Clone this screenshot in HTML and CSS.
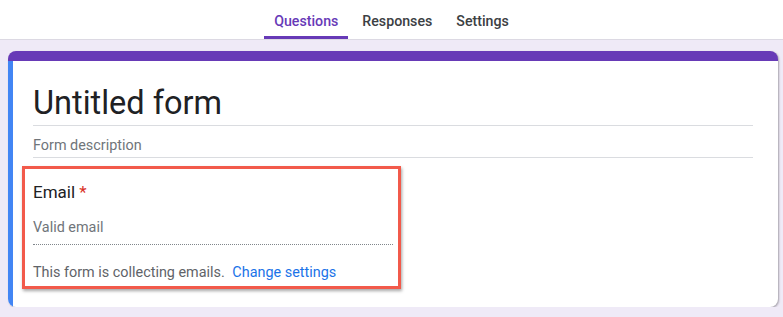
FILE: index.html
```html
<!DOCTYPE html>
<html lang="en">

<head>
    <meta charset="UTF-8">
    <meta name="viewport" content="width=device-width, initial-scale=1.0">
    <title>Untitled form</title>
    <link rel="stylesheet" href="styles.css">
</head>

<body>
    <div class="form-header">
        <ul class="tabs">
            <li class="tab active">Questions</li>
            <li class="tab">Responses</li>
            <li class="tab">Settings</li>
        </ul>
    </div>

    <div class="form-main">
        <div class="form-card">
            <div class="card-body">
                <div class="form-title">Untitled form</div>
                <div class="form-desc">Form description</div>

                <!--邮箱字段-->
                <div class="email-box">
                    <div class="email-label">Email <span class="required">*</span></div>
                    <div class="email-input">Valid email</div>
                    <div class="email-note">This form is collecting emails. <a href="#" class="change-link">Change settings</a></div>
                </div>
            </div>
        </div>
    </div>
</body>

</html>
```

FILE: styles.css
```css
* {
    padding: 0;
    margin: 0;
    list-style: none;
    text-decoration: none;
    box-sizing: border-box;
}

body {
    background: #efeaf7;
    font-family: Roboto, "Liberation Sans", sans-serif;
    color: #202124;
}

/*顶部标签栏*/
.form-header {
    background: #fff;
    height: 40px;
    border-bottom: 1px solid #dcd9e3;
}

.tabs {
    display: flex;
    justify-content: center;
    gap: 4px;
    height: 39px;
}

.tab {
    height: 39px;
    padding: 11px 10px 0;
    font-size: 14.2px;
    font-weight: 500;
    line-height: 20px;
    color: #3c4043;
    cursor: pointer;
}

.tab.active {
    color: #673ab7;
    border-bottom: 3px solid #673ab7;
    border-radius: 3px 3px 0 0;
}

/*表单卡片*/
.form-main {
    padding: 11px 5px 0 8px;
}

.form-card {
    background: #fff;
    border-top: 10px solid #673ab7;
    border-radius: 8px;
    box-shadow: 1px 1px 2px rgba(0, 0, 0, 0.3);
    overflow: hidden;
}

.card-body {
    border-left: 5px solid #4285f4;
    padding: 22px 25px 18px 20px;
}

.form-title {
    font-size: 32.5px;
    line-height: 40px;
    color: #202124;
    padding-bottom: 2px;
    border-bottom: 1px solid #dadce0;
}

.form-desc {
    margin-top: 10px;
    font-size: 14.4px;
    line-height: 20px;
    color: #70757a;
    padding-bottom: 1px;
    border-bottom: 1px solid #dadce0;
}

/*红框标注*/
.email-box {
    margin: 8px 0 0 -11px;
    width: 379px;
    border: 3px solid #f25a4b;
    padding: 11px 5px 3px 8px;
    box-shadow: 1px 2px 3px rgba(0, 0, 0, 0.35);
}

.email-label {
    font-size: 17px;
    line-height: 24px;
    color: #202124;
}

.required {
    color: #d93025;
}

.email-input {
    margin-top: 14px;
    font-size: 14.4px;
    line-height: 20px;
    color: #70757a;
    padding-bottom: 6px;
    border-bottom: 1px dotted #80868b;
}

.email-note {
    margin-top: 18px;
    font-size: 14.4px;
    line-height: 20px;
    color: #5f6368;
}

.change-link {
    color: #1a73e8;
    margin-left: 4px;
}
```
